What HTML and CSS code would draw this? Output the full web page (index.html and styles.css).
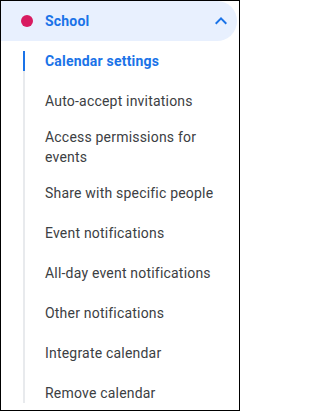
FILE: index.html
```html
<!DOCTYPE html>
<html lang="en">
<head>
<meta charset="utf-8">
<title>Calendar settings</title>
<link rel="stylesheet" href="styles.css">
</head>
<body>
<div class="panel">
  <div class="group-header">
    <span class="dot"></span>
    <span class="group-title">School</span>
    <svg class="chevron" viewBox="0 0 24 24" width="24" height="24" aria-hidden="true">
      <path d="M12 8l-6 6 1.41 1.41L12 10.83l4.59 4.58L18 14z" fill="currentColor"/>
    </svg>
  </div>
  <ul class="sub-list">
    <li class="sub-item active">Calendar settings</li>
    <li class="sub-item">Auto-accept invitations</li>
    <li class="sub-item">Access permissions for events</li>
    <li class="sub-item">Share with specific people</li>
    <li class="sub-item">Event notifications</li>
    <li class="sub-item">All-day event notifications</li>
    <li class="sub-item">Other notifications</li>
    <li class="sub-item">Integrate calendar</li>
    <li class="sub-item">Remove calendar</li>
  </ul>
</div>
</body>
</html>
```
FILE: styles.css
```css
* { box-sizing: border-box; }
html, body {
  margin: 0;
  padding: 0;
  background: #fff;
}
.panel {
  width: 240px;
  height: 411px;
  border: 1px solid #000;
  overflow: hidden;
  font-family: Roboto, "Liberation Sans", Arial, sans-serif;
  font-size: 14px;
  line-height: 20px;
  letter-spacing: 0.2px;
  color: #3c4043;
}
.group-header {
  display: flex;
  align-items: center;
  height: 40px;
  margin-right: 2px;
  padding: 0 4px 0 20px;
  background: #e8f0fe;
  border-radius: 0 20px 20px 0;
  color: #1a73e8;
}
.dot {
  width: 12px;
  height: 12px;
  border-radius: 50%;
  background: #d81b60;
  flex: none;
}
.group-title {
  flex: 1;
  margin-left: 12px;
  font-weight: 700;
}
.chevron {
  display: block;
  flex: none;
}
.sub-list {
  position: relative;
  list-style: none;
  margin: 0 0 0 22px;
  padding: 0;
}
.sub-list::before {
  content: "";
  position: absolute;
  left: 0;
  top: 10px;
  bottom: 10px;
  width: 2px;
  background: #e8eaed;
}
.sub-item {
  position: relative;
  display: flex;
  align-items: center;
  min-height: 40px;
  padding: 6px 16px 6px 22px;
}
.sub-item.active {
  color: #1a73e8;
  font-weight: 700;
}
.sub-item.active::before {
  content: "";
  position: absolute;
  left: 0;
  top: 10px;
  width: 2px;
  height: 20px;
  background: #1a73e8;
}
```
